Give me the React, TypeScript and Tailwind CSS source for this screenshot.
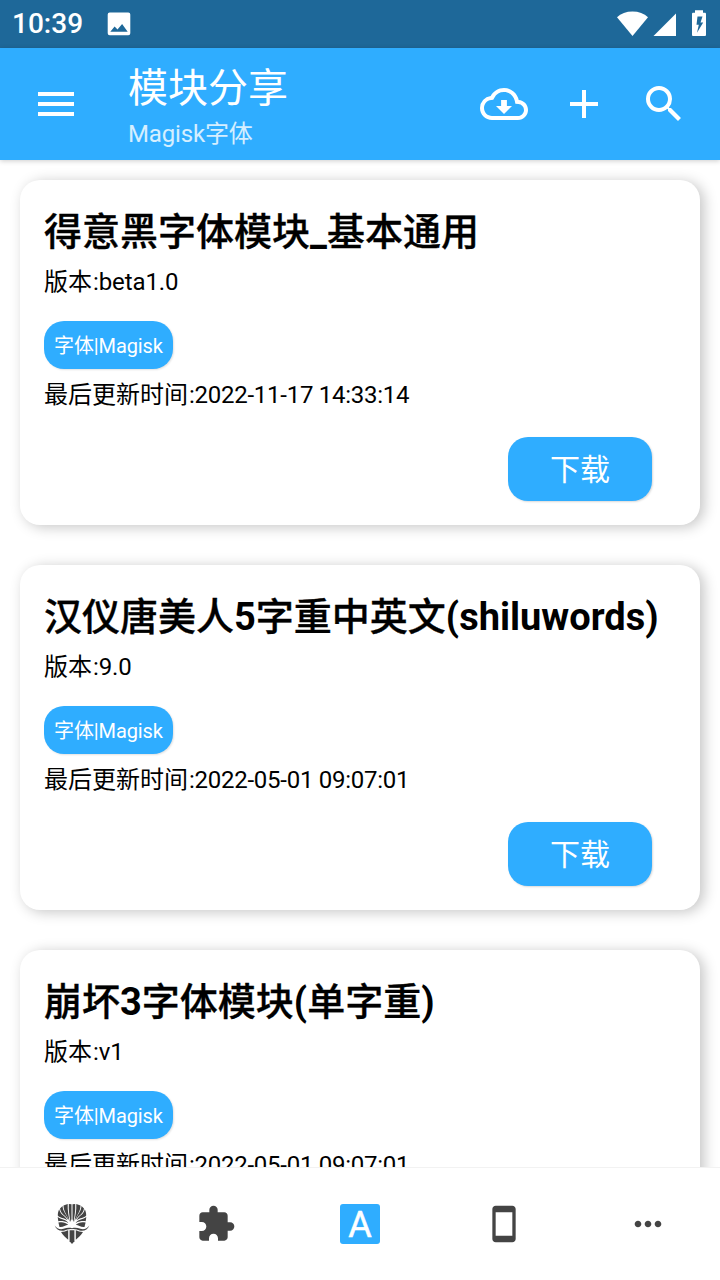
import React from 'react';
import {
  MdAdd,
  MdExtension,
  MdMenu,
  MdMoreHoriz,
  MdOutlineCloudDownload,
  MdSearch,
  MdStayCurrentPortrait,
} from 'react-icons/md';

interface FontModule {
  name: string;
  version: string;
  tag: string;
  updatedAt: string;
}

const modules: FontModule[] = [
  { name: '得意黑字体模块_基本通用', version: 'beta1.0', tag: '字体|Magisk', updatedAt: '2022-11-17 14:33:14' },
  { name: '汉仪唐美人5字重中英文(shiluwords)', version: '9.0', tag: '字体|Magisk', updatedAt: '2022-05-01 09:07:01' },
  { name: '崩坏3字体模块(单字重)', version: 'v1', tag: '字体|Magisk', updatedAt: '2022-05-01 09:07:01' },
];

const StatusBar: React.FC = () => (
  <div className="flex h-12 shrink-0 items-center bg-[#1e6899] pl-3 text-white">
    <span className="w-[95px] text-[28px] leading-[52px] font-medium">10:39</span>
    <svg className="size-6" viewBox="0 0 24 24" fill="currentColor">
      <path
        fillRule="evenodd"
        d="M2.7.6h18.600a2 2 0 0 1 2 2v18.600a2 2 0 0 1-2 2H2.700a2 2 0 0 1-2-2V2.600a2 2 0 0 1 2-2zM3.300 19.700h17.400L15.100 12l-4.600 5.500-2.900-2.900z"
      />
    </svg>
    <svg className="ml-auto h-12 w-[110px]" viewBox="610 0 110 48" fill="currentColor">
      <path d="M632.5 36 617 17.200c3.800-3.700 9.300-5.700 15.500-5.700s11.700 2 15.500 5.700z" />
      <path d="M676 13.500V36H653.500z" />
      <path
        fillRule="evenodd"
        d="M695 10.200h8v2.500h1.700c.8 0 1.300.5 1.300 1.300v20.700c0 .8-.5 1.300-1.300 1.300h-11.400c-.8 0-1.300-.5-1.300-1.300V14c0-.8.5-1.300 1.300-1.300h1.700zM697.500 16.500l-1 8.300h2.300l-1.800 8 6.200-10.200h-2.700l2-6.100z"
      />
    </svg>
  </div>
);

const AppBar: React.FC = () => (
  <header className="z-10 flex h-28 shrink-0 items-center bg-[#2fadff] px-8 text-white shadow-[0_1px_5px_rgba(0,0,0,0.2)]">
    <MdMenu className="size-12" />
    <div className="ml-12 flex-1 pt-[10px]">
      <h1 className="text-[40px] leading-[50px]">模块分享</h1>
      <p className="text-2xl leading-[41px] tracking-[-0.15px] text-white/80">Magisk字体</p>
    </div>
    <div className="flex gap-8">
      <MdOutlineCloudDownload className="size-12" />
      <MdAdd className="size-12" />
      <MdSearch className="size-12" />
    </div>
  </header>
);

// Han runs are set one weight lighter than the Latin ones, so both look equally dark
const ModuleTitle: React.FC<{ text: string }> = ({ text }) => (
  <h2 className="pt-px text-[38px] leading-[54px] font-bold whitespace-nowrap">
    {text.split(/([\u4e00-\u9fff]+)/).map((part, i) =>
      i % 2 ? (
        <span key={i} className="font-medium [-webkit-text-stroke:0.35px_black]">
          {part}
        </span>
      ) : (
        part
      )
    )}
  </h2>
);

const ModuleCard: React.FC<{ item: FontModule }> = ({ item }) => (
  <article className="flex h-[345px] shrink-0 flex-col items-start rounded-[20px] bg-white px-6 pt-6 pb-6 text-black shadow-[4px_2px_14px_rgba(0,0,0,0.23)]">
    <ModuleTitle text={item.name} />
    <p className="-mt-px text-2xl leading-12">
      版本<span className="ml-px tracking-[-0.1px]">:{item.version}</span>
    </p>
    <span className="mt-[15px] h-12 w-[129px] rounded-[20px] bg-[#2fadff] pl-2.5 text-xl leading-[50px] tracking-[-0.1px] whitespace-nowrap text-white shadow-[1px_1px_2px_rgba(0,0,0,0.12)]">
      {item.tag}
    </span>
    <p className="mt-0.5 text-2xl leading-12">
      最后更新时间<span className="ml-px tracking-[-0.26px]">:{item.updatedAt}</span>
    </p>
    <button className="mt-auto mr-6 h-16 w-36 self-end rounded-[20px] bg-[#2fadff] text-[30px] leading-[66px] text-white shadow-[1px_1px_2px_rgba(0,0,0,0.15)]">
      下载
    </button>
  </article>
);

const MaskHalf: React.FC = () => (
  <>
    <path d="M16.800 0l2.700.2V15l-.9 3C17.300 12 16.500 6 16.800 0z" />
    <path d="M11.500 1.500 15.700.1C15.400 7 16.700 12 17.700 18 15.500 11 11.500 8 11.500 1.500z" />
    <path d="M8 4.500l2.500-2.400c.3 6 4.500 8.400 5.900 14C13.500 11 9 10.500 8 4.500z" />
    <path d="M5.800 11.500c0-2.300.5-4.300 1.400-6.200 1 5.500 5.800 6.200 8.300 11C12 13.500 8 14.500 5.800 11.500z" />
    <path d="M5.700 13c3 2.500 8 2 10.800 6.200C13 17 9.500 17 6.300 17.200z" />
    <path d="M6.400 18.600c4-.9 7-.3 9.800 2.200-3 .7-4.700 2.500-8.700 2.200z" />
    <path d="M2.700 21.500c2 3 5.300 4.300 8.800 3.300 3-1 5.500-1.300 8.500-.6v1c-3-.4-5.500.8-7.500 1.400-4.500 1-8.300-.8-9.800-5.100z" />
    <path d="M9 28c3 0 5-.9 7.200-1.700v9.500C13.500 33.500 11 31 9 28z" />
    <path d="M17.600 26.200H20V40l-2.400-2.700z" />
  </>
);

const MaskIcon: React.FC = () => (
  <svg className="size-10" viewBox="0 0 40 40" fill="currentColor">
    <MaskHalf />
    <g transform="matrix(-1 0 0 1 40 0)">
      <MaskHalf />
    </g>
  </svg>
);

const BottomNav: React.FC = () => (
  <nav className="z-10 grid h-[113px] shrink-0 grid-cols-5 place-items-center border-t border-[#f2f2f2] bg-white text-[#444]">
    <MaskIcon />
    <MdExtension className="size-10" />
    <span className="size-10 rounded-[3px] bg-[#2fadff] text-center text-[36px] leading-[42px] text-white [-webkit-text-stroke:0.5px_white]">
      A
    </span>
    <MdStayCurrentPortrait className="size-10" />
    <MdMoreHoriz className="size-10" />
  </nav>
);

export default function App() {
  return (
    <div className="flex h-screen flex-col overflow-hidden bg-white font-['Roboto','Noto_Sans_CJK_SC',sans-serif]">
      <StatusBar />
      <AppBar />
      <main className="flex min-h-0 flex-1 flex-col gap-10 overflow-hidden p-5">
        {modules.map((item) => (
          <ModuleCard key={item.name} item={item} />
        ))}
      </main>
      <BottomNav />
    </div>
  );
}
